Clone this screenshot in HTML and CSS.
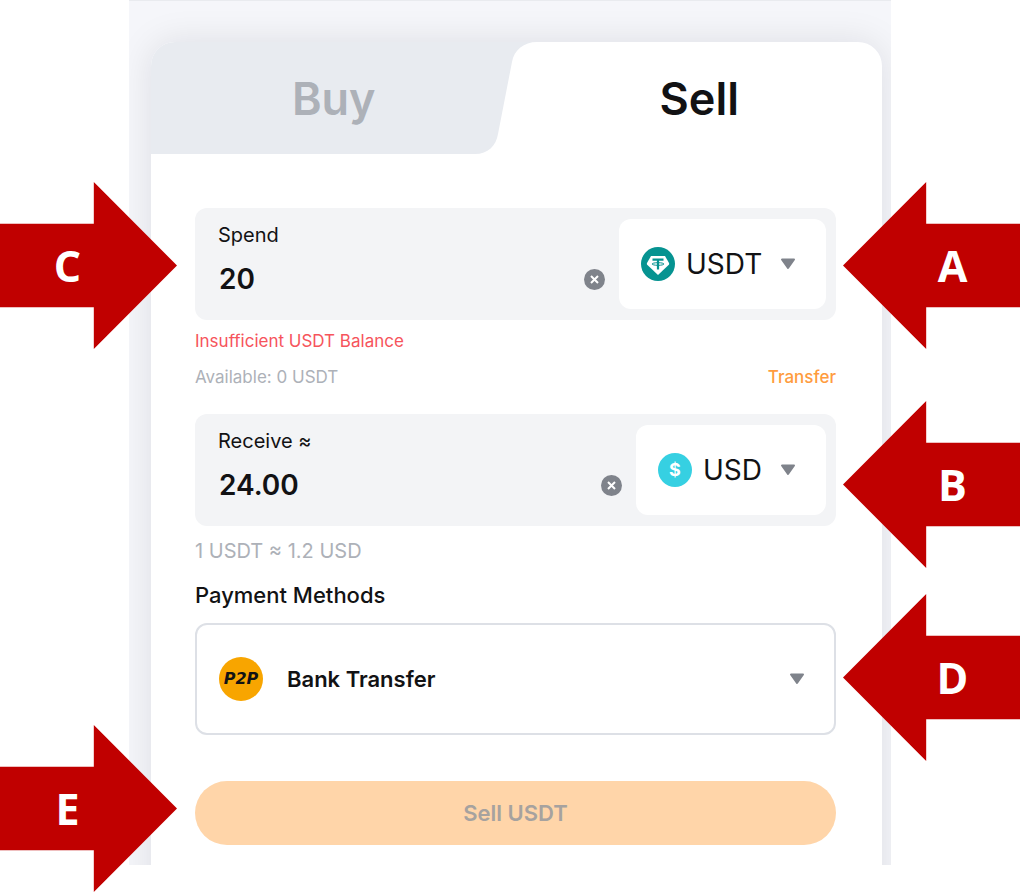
FILE: index.html
```html
<!DOCTYPE html>
<html lang="en">
<head>
    <meta charset="UTF-8">
    <meta name="viewport" content="width=device-width, initial-scale=1">
    <title>Sell USDT</title>
    <link rel="stylesheet" href="styles.css">
</head>
<body>
    <main class="guide">
        <div class="panel">
            <form class="card">
                <!-- Buy / Sell tabs -->
                <div class="tabs">
                    <svg class="tab-shape" viewBox="0 0 731 112" preserveAspectRatio="none" aria-hidden="true">
                        <path d="M0 0H386C373 0 363 8 361 20L347 92C345 104 337 112 324 112H0Z" fill="#e8ebf0"/>
                    </svg>
                    <button type="button" class="tab">Buy</button>
                    <button type="button" class="tab active">Sell</button>
                </div>

                <div class="content">
                    <div class="field">
                        <div class="amount">
                            <label for="spend">Spend</label>
                            <div class="amount-row">
                                <input type="text" id="spend" value="20">
                                <button type="button" class="clear" aria-label="Clear spend">
                                    <svg width="21" height="21" viewBox="0 0 21 21">
                                        <circle cx="10.5" cy="10.5" r="10.5" fill="#7f838b"/>
                                        <path d="M7 7l7 7M14 7l-7 7" stroke="#fff" stroke-width="2"/>
                                    </svg>
                                </button>
                            </div>
                        </div>
                        <div class="coin">
                            <svg width="34" height="34" viewBox="-17 -17 34 34" aria-hidden="true">
                                <circle r="17" fill="#069391"/>
                                <path d="M-7 -8H7L11 -1Q11.5 0 10.8 .8L0 11L-10.8 .8Q-11.5 0 -11 -1Z" fill="#fff"/>
                                <path d="M-5.500 -4.300H5.500M0 -4.300V5.500" stroke="#069391" stroke-width="2.200" fill="none"/>
                                <ellipse cy="0" rx="6" ry="1.3" stroke="#069391" stroke-width="1" fill="none"/>
                            </svg>
                            <select aria-label="Spend currency">
                                <option>USDT</option>
                            </select>
                            <svg class="caret" width="16" height="12" viewBox="0 0 16 12" aria-hidden="true">
                                <path d="M2 1.5H14L8 10Z"/>
                            </svg>
                        </div>
                    </div>

                    <p class="error">Insufficient USDT Balance</p>
                    <div class="balance">
                        <span>Available: 0 USDT</span>
                        <a href="#">Transfer</a>
                    </div>

                    <div class="field">
                        <div class="amount">
                            <label for="receive">Receive ≈</label>
                            <div class="amount-row">
                                <input type="text" id="receive" value="24.00">
                                <button type="button" class="clear" aria-label="Clear receive">
                                    <svg width="21" height="21" viewBox="0 0 21 21">
                                        <circle cx="10.5" cy="10.5" r="10.5" fill="#7f838b"/>
                                        <path d="M7 7l7 7M14 7l-7 7" stroke="#fff" stroke-width="2"/>
                                    </svg>
                                </button>
                            </div>
                        </div>
                        <div class="coin">
                            <span class="dollar" aria-hidden="true">$</span>
                            <select aria-label="Receive currency">
                                <option>USD</option>
                            </select>
                            <svg class="caret" width="16" height="12" viewBox="0 0 16 12" aria-hidden="true">
                                <path d="M2 1.5H14L8 10Z"/>
                            </svg>
                        </div>
                    </div>

                    <p class="rate">1 USDT ≈ 1.2 USD</p>

                    <label class="method-label" for="method">Payment Methods</label>
                    <div class="method">
                        <span class="p2p" aria-hidden="true">P2P</span>
                        <select id="method">
                            <option>Bank Transfer</option>
                        </select>
                        <svg class="caret" width="16" height="12" viewBox="0 0 16 12" aria-hidden="true">
                            <path d="M2 1.5H14L8 10Z"/>
                        </svg>
                    </div>

                    <button type="submit" class="submit" disabled>Sell USDT</button>
                </div>
            </form>
        </div>

        <!-- Callouts over the panel -->
        <div class="arrow from-right arrow-a">A</div>
        <div class="arrow from-right arrow-b">B</div>
        <div class="arrow from-left arrow-c">C</div>
        <div class="arrow from-right arrow-d">D</div>
        <div class="arrow from-left arrow-e">E</div>
    </main>
</body>
</html>
```

FILE: styles.css
```css
* {
    box-sizing: border-box;
}

body {
    margin: 0;
    background: #fff;
    color: #121214;
    font-family: Inter, "Liberation Sans", sans-serif;
}

p {
    margin: 0;
}

button, input, select {
    font-family: inherit;
    color: inherit;
    border: none;
    background: none;
    padding: 0;
    margin: 0;
}

select {
    appearance: none;
}

.guide {
    position: relative;
    padding: 0 129px 27px;
}

.panel {
    overflow: hidden;
    background: #f5f6fa;
    border-top: 1px solid #e9ebef;
    padding: 41px 9px 0 22px;
}

/* runs past the panel so its bottom shadow is cut off */
.card {
    background: #fff;
    border-radius: 24px;
    box-shadow: 0 0 36px rgba(20, 20, 30, 0.1);
    padding-bottom: 80px;
    margin-bottom: -60px;
}

.tabs {
    display: grid;
    grid-template-columns: 1fr 1fr;
    grid-template-rows: 112px;
    border-radius: 24px 24px 0 0;
    overflow: hidden;
}

.tab-shape {
    grid-area: 1 / 1 / 2 / 3;
    width: 100%;
    height: 100%;
}

.tab {
    grid-area: 1 / 1;
    z-index: 1;
    font-size: 45px;
    font-weight: 600;
    color: #adb1b8;
    cursor: pointer;
}

.tab.active {
    grid-area: 1 / 2;
    color: #121214;
}

.content {
    display: flex;
    flex-direction: column;
    padding: 54px 46px 0 44px;
}

.field {
    display: flex;
    gap: 14px;
    background: #f3f4f6;
    border-radius: 12px;
    padding: 11px 10px 11px 23px;
}

.amount {
    flex: 1;
    min-width: 0;
    padding-top: 4px;
    font-size: 20px;
    line-height: 24px;
}

.amount label {
    display: block;
    margin-bottom: 14px;
}

.amount-row {
    display: flex;
    align-items: center;
}

.amount input {
    flex: 1;
    min-width: 0;
    height: 36px;
    padding-left: 1px;
    font-size: 28px;
    font-weight: 600;
}

.clear {
    display: flex;
    cursor: pointer;
}

.coin {
    display: flex;
    align-items: center;
    height: 90px;
    padding: 0 30px 0 22px;
    background: #fff;
    border-radius: 12px;
}

.coin select {
    margin: 0 17px 0 11px;
    font-size: 28px;
}

.dollar {
    width: 34px;
    border-radius: 50%;
    background: #36d0e2;
    color: #fff;
    font-size: 18px;
    font-weight: 700;
    line-height: 34px;
    text-align: center;
}

.caret {
    fill: #7f838b;
    stroke: #7f838b;
    stroke-width: 2;
    stroke-linejoin: round;
}

.error, .balance {
    font-size: 17px;
    line-height: 24px;
}

.error {
    margin: 9px 0 12px;
    color: #f6545c;
}

.balance {
    display: flex;
    justify-content: space-between;
    margin-bottom: 25px;
    color: #adb1b8;
}

.balance a {
    color: #ff9c3e;
    font-weight: 500;
    text-decoration: none;
}

.rate {
    margin: 13px 0 20px;
    font-size: 20px;
    line-height: 24px;
    color: #adb1b8;
}

.method-label {
    font-size: 22px;
    font-weight: 500;
    line-height: 24px;
}

.method {
    display: flex;
    align-items: center;
    gap: 24px;
    height: 112px;
    margin: 16px 0 46px;
    padding: 0 29px 0 22px;
    border: 2px solid #dde0e6;
    border-radius: 12px;
}

.method select {
    flex: 1;
    font-size: 22px;
    font-weight: 600;
}

.p2p {
    width: 44px;
    border-radius: 50%;
    background: #f8a500;
    font: italic bold 16px/44px "DejaVu Sans", sans-serif;
    text-align: center;
}

.submit {
    height: 64px;
    border-radius: 32px;
    background: #ffd5a9;
    color: #a6a29f;
    font-size: 22px;
    font-weight: 600;
}

.arrow {
    position: absolute;
    display: flex;
    align-items: center;
    justify-content: center;
    width: 177px;
    height: 167px;
    background: #c00000;
    color: #fff;
    font-family: "Open Sans", sans-serif;
    font-size: 43px;
    font-weight: 700;
}

.from-left {
    left: 0;
    padding-right: 42px;
    clip-path: polygon(0 25%, 53% 25%, 53% 0, 100% 50%, 53% 100%, 53% 75%, 0 75%);
}

.from-right {
    right: 0;
    padding-left: 42px;
    clip-path: polygon(100% 25%, 47% 25%, 47% 0, 0 50%, 47% 100%, 47% 75%, 100% 75%);
}

.arrow-a, .arrow-c {
    top: 182px;
}

.arrow-b {
    top: 401px;
}

.arrow-d {
    top: 594px;
}

.arrow-e {
    top: 725px;
}
```
